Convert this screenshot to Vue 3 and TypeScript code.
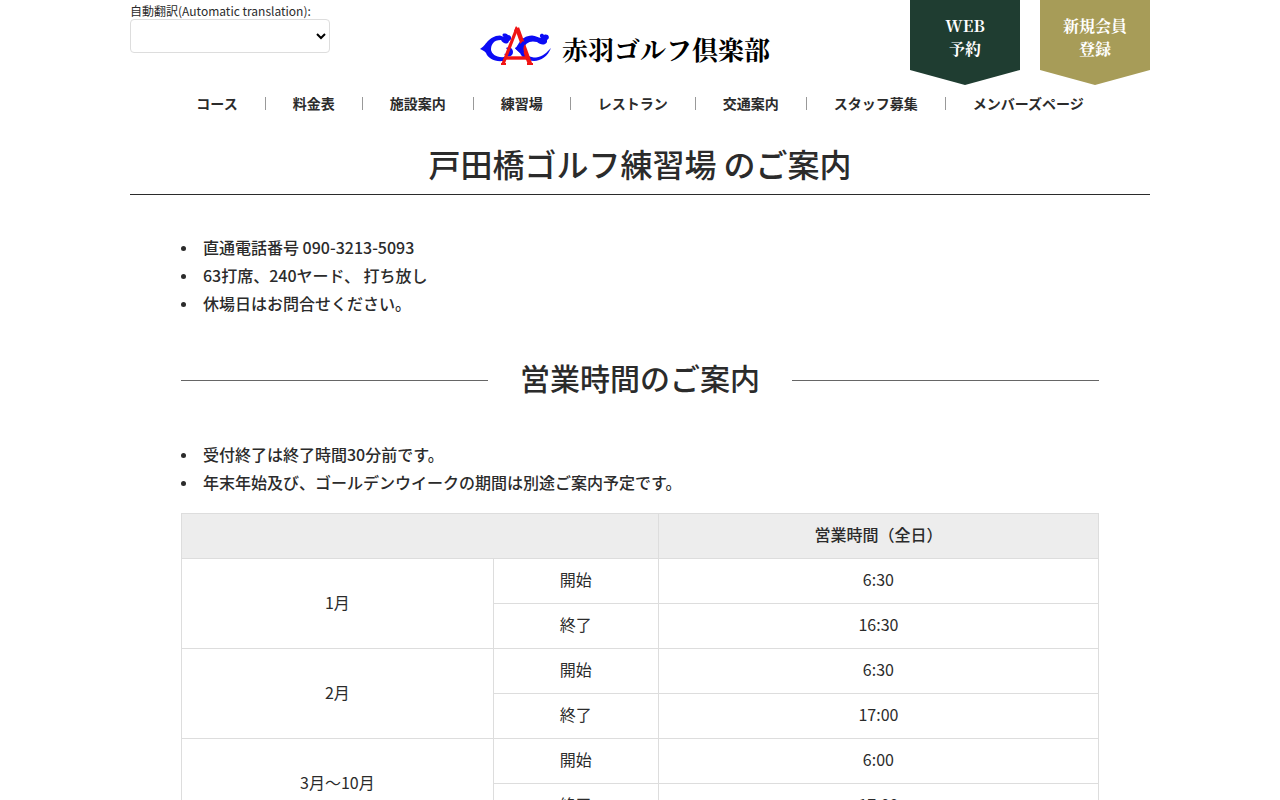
<script setup lang="ts">
const navItems: string[] = [
  'コース', '料金表', '施設案内', '練習場', 'レストラン', '交通案内', 'スタッフ募集', 'メンバーズページ',
]
const infoItems: string[] = [
  '直通電話番号 090-3213-5093',
  '63打席、240ヤード、 打ち放し',
  '休場日はお問合せください。',
]
const hourNotes: string[] = [
  '受付終了は終了時間30分前です。',
  '年末年始及び、ゴールデンウイークの期間は別途ご案内予定です。',
]
interface Hours { month: string; open: string; close: string }
const hours: Hours[] = [
  { month: '1月', open: '6:30', close: '16:30' },
  { month: '2月', open: '6:30', close: '17:00' },
  { month: '3月～10月', open: '6:00', close: '17:00' },
]
</script>

<template>
  <div class="page">
    <header class="header">
      <div class="top">
        <div class="translate">
          <label for="lang">自動翻訳(Automatic translation):</label>
          <select id="lang"><option value=""></option></select>
        </div>
        <a class="logo" href="#">
          <svg class="mark" viewBox="0 0 72 42" aria-hidden="true">
            <g fill="#0b0bf5">
              <path d="M0 24C6 21 8 11 20 10.5L24 12C20 9 25 7 28 10C32 10 32 15 29 16C28 20 23 19 21 15C13 15 11 20 11 25C12 29 16 33 25 32L23 36C14 37 8 33 6 28C5 26 2 25 0 24Z" />
              <path d="M26 23C29 21 33 23 33 27C33 32 27 33 24 29C28 29 29 27 26 23Z" />
              <path d="M35 23C38 23 39 11 52 10.5C56 10.5 58 13 61 13C58 10 62 7 64 10C68 8 71 13 67 15C68 20 61 21 57 17C50 15 45 18 44 24C45 30 50 32.500 56 32.500C63 32 67 27 71 23C68 31 61 36 54 36C47 36 42 33 40 28C38 26 36 25 35 23Z" />
            </g>
            <g fill="none" stroke="#f01414">
              <path d="M37 3L23 39" stroke-width="3.2" />
              <path d="M37 3L50 39" stroke-width="4.4" />
              <path d="M26 33H48" stroke-width="3.4" />
              <path d="M21 39H26M47 39H53" stroke-width="2" />
            </g>
            <path d="M36 1L40 6H34Z" fill="#f01414" />
            <path d="M35 23C38 23 40 19 43 16L46 18C43 21 43 24 44 27C42 29 40 28 39 27C38 25 36 25 35 23Z" fill="#0b0bf5" />
          </svg>
          <span>赤羽ゴルフ倶楽部</span>
        </a>
        <div class="actions">
          <a class="flag green" href="#">WEB<br>予約</a>
          <a class="flag gold" href="#">新規会員<br>登録</a>
        </div>
      </div>
      <nav class="nav">
        <a v-for="item in navItems" :key="item" href="#">{{ item }}</a>
      </nav>
    </header>
    <main>
      <h1>戸田橋ゴルフ練習場 のご案内</h1>
      <div class="content">
        <ul>
          <li v-for="item in infoItems" :key="item">{{ item }}</li>
        </ul>
        <h2>営業時間のご案内</h2>
        <ul>
          <li v-for="item in hourNotes" :key="item">{{ item }}</li>
        </ul>
        <table>
          <colgroup><col class="c-month"><col class="c-kind"><col class="c-time"></colgroup>
          <thead>
            <tr><th colspan="2"></th><th scope="col">営業時間（全日）</th></tr>
          </thead>
          <tbody v-for="row in hours" :key="row.month">
            <tr><td rowspan="2">{{ row.month }}</td><td>開始</td><td>{{ row.open }}</td></tr>
            <tr><td>終了</td><td>{{ row.close }}</td></tr>
          </tbody>
        </table>
      </div>
    </main>
  </div>
</template>

<style>
body {
  margin: 0;
  background: #fff;
}
</style>

<style scoped>
.page {
  height: 100vh;
  overflow: hidden;
  color: #2b2b2b;
  font-family: "Noto Sans CJK JP", sans-serif;
  font-size: 16px;
  line-height: 28px;
}
.page * {
  box-sizing: border-box;
}
a {
  color: inherit;
  text-decoration: none;
}
.header,
main {
  max-width: 1020px;
  margin: 0 auto;
}
.top {
  display: grid;
  grid-template-columns: 1fr auto 1fr;
  align-items: start;
}
.translate {
  padding-top: 3px;
  font-size: 12px;
  line-height: 16px;
}
.translate label,
.translate select {
  display: block;
}
.translate select {
  width: 200px;
  height: 34px;
  border: 1px solid #ddd;
  border-radius: 4px;
  background: #fff;
  color: #000;
}
.logo {
  display: flex;
  gap: 10px;
  padding: 25px 30px 0 0;
  color: #000;
  font: bold 26px/48px "Noto Serif CJK JP", "Liberation Serif", "Noto Sans CJK JP", serif;
  white-space: nowrap;
}
.mark {
  width: 72px;
  height: 42px;
}
.actions {
  display: flex;
  justify-content: flex-end;
  gap: 20px;
}
.flag {
  width: 110px;
  height: 85px;
  padding-top: 14px;
  clip-path: polygon(0 0, 100% 0, 100% 70px, 50% 100%, 0 70px);
  color: #fff;
  font: bold 16px/23px "Noto Serif CJK JP", "Liberation Serif", "Noto Sans CJK JP", serif;
  text-align: center;
}
.green {
  background: #1f3d31;
}
.gold {
  background: #a79c58;
}
.nav {
  display: flex;
  justify-content: center;
  padding-top: 12px;
  font-size: 14px;
  font-weight: bold;
  line-height: 13px;
  white-space: nowrap;
}
.nav a {
  padding: 0 27px;
}
.nav a + a {
  border-left: 1px solid #999;
}
h1 {
  margin: 31px 0 0;
  padding-bottom: 9px;
  border-bottom: 1px solid #2b2b2b;
  font-size: 32px;
  font-weight: 500;
  line-height: 44px;
  text-align: center;
}
.content {
  width: 90%;
  margin: 0 auto;
  padding-top: 38px;
}
ul {
  margin: 0;
  padding: 0;
  list-style: none;
  font-weight: 500;
}
li {
  display: flex;
  align-items: center;
  gap: 17px;
}
li::before {
  content: "";
  width: 5px;
  height: 5px;
  margin-top: 2px;
  border-radius: 50%;
  background: #2b2b2b;
}
h2 {
  display: flex;
  align-items: center;
  gap: 32px;
  margin: 38px 0 40px;
  font-size: 30px;
  font-weight: 500;
  line-height: 45px;
}
h2::before,
h2::after {
  content: "";
  flex: 1;
  height: 1px;
  margin-top: 5px;
  background: #666;
}
table {
  width: 100%;
  margin-top: 17px;
  border-collapse: collapse;
  table-layout: fixed;
  text-align: center;
}
.c-month {
  width: 34%;
}
.c-kind {
  width: 18%;
}
.c-time {
  width: 48%;
}
th,
td {
  height: 45px;
  padding: 6px 8px 10px;
  border: 1px solid #ddd;
}
th {
  background: #ededed;
  font-weight: 500;
}
</style>
